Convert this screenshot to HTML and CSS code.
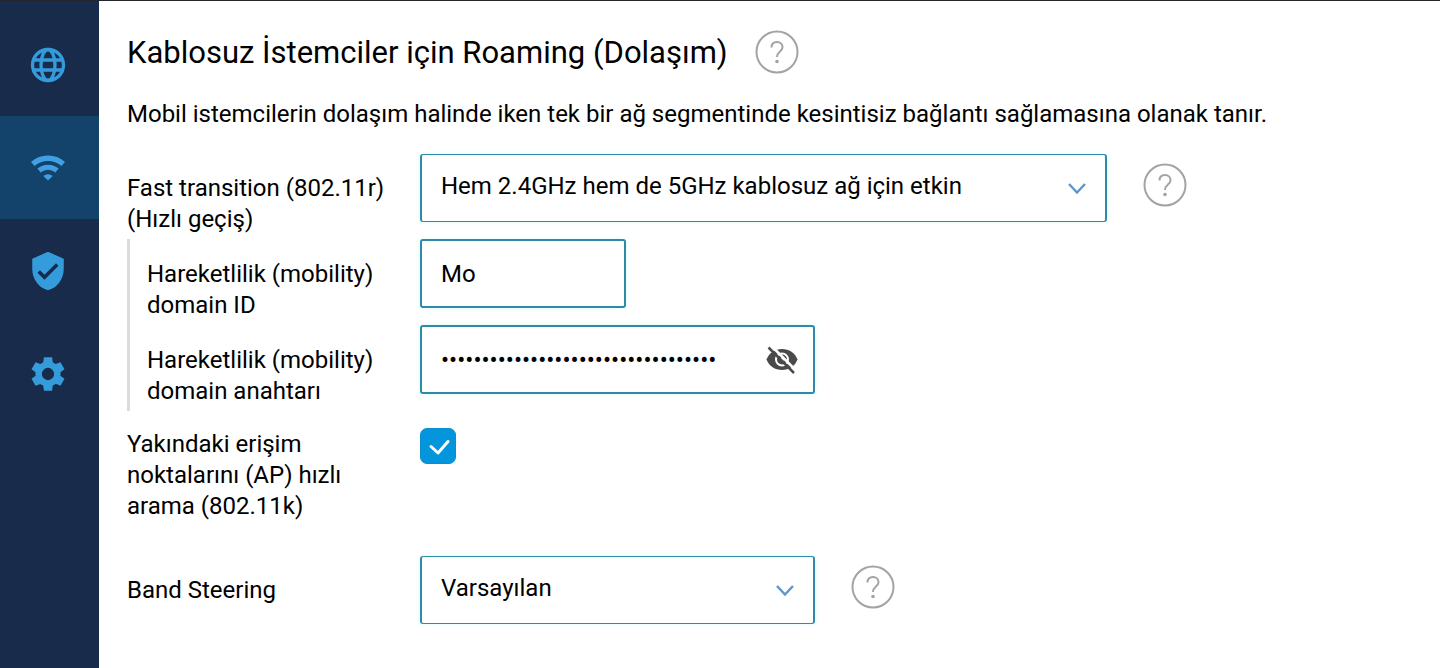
FILE: index.html
```html
<!DOCTYPE html>
<html lang="tr">
<head>
  <meta charset="utf-8">
  <title>Roaming</title>
  <link rel="stylesheet" href="styles.css">
</head>
<body>
  <nav class="sidebar">
    <a class="nav-item" href="#" aria-label="İnternet">
      <svg width="36" height="36" viewBox="0 0 36 36" fill="none" stroke="currentColor" stroke-width="3.3">
        <circle cx="18" cy="18" r="15.5"/>
        <ellipse cx="18" cy="18" rx="7" ry="15.5"/>
        <path d="M4 13h28M4 23h28"/>
      </svg>
    </a>
    <a class="nav-item active" href="#" aria-label="Kablosuz">
      <svg width="36" height="36" viewBox="0 0 36 36" fill="none" stroke="currentColor">
        <path stroke-width="5.5" d="M2.800 14a23 23 0 0 1 30.400 0"/>
        <path stroke-width="5" d="M9 20.500a14 14 0 0 1 18 0"/>
        <path fill="currentColor" stroke="none" d="M13.300 26a7 7 0 0 1 9.400 0L18 30.500z"/>
      </svg>
    </a>
    <a class="nav-item" href="#" aria-label="Güvenlik">
      <svg width="42" height="42" viewBox="0 0 24 24" fill="currentColor">
        <path d="M12 1L3 5v6c0 5.55 3.84 10.74 9 12 5.16-1.26 9-6.45 9-12V5l-9-4zm-2 16l-4-4 1.41-1.41L10 14.17l6.59-6.59L18 9l-8 8z"/>
      </svg>
    </a>
    <a class="nav-item" href="#" aria-label="Ayarlar">
      <svg width="40" height="40" viewBox="0 0 24 24" fill="currentColor">
        <path fill-rule="evenodd" d="M19.44 12.99c.04-.33.07-.65.07-.99s-.03-.66-.07-.99l2.45-1.9-2.43-4.22-2.87 1.16c-.52-.4-1.09-.74-1.71-1L14.44 2H9.57l-.44 3.07c-.62.26-1.19.6-1.71 1L4.55 4.89 2.11 9.11l2.44 1.9c-.04.33-.07.65-.07.99s.03.66.07.99l-2.44 1.91 2.43 4.2 2.88-1.15c.53.41 1.1.75 1.72 1.01L9.58 22h4.85l.44-3.07c.62-.26 1.2-.6 1.73-1.01l2.86 1.19 2.43-4.2zM12 15.7a3.7 3.7 0 1 1 0-7.4 3.7 3.7 0 0 1 0 7.4z"/>
      </svg>
    </a>
  </nav>

  <main class="content">
    <header class="page-header">
      <h1>Kablosuz İstemciler için Roaming (Dolaşım)</h1>
      <button class="help" type="button" aria-label="Yardım">
        <svg width="44" height="44" viewBox="0 0 44 44" fill="none" stroke="currentColor" stroke-width="2">
          <circle cx="22" cy="22" r="20.5"/>
          <path d="M16.5 17.5c0-3.5 2.3-5.5 5.5-5.5s5.5 2.2 5.5 5.2c0 4.5-5.5 4.3-5.5 9.8"/>
          <circle cx="22" cy="31.5" r="1.8" fill="currentColor" stroke="none"/>
        </svg>
      </button>
    </header>
    <p class="intro">Mobil istemcilerin dolaşım halinde iken tek bir ağ segmentinde kesintisiz bağlantı sağlamasına olanak tanır.</p>

    <form>
      <div class="row">
        <label for="fast-transition">Fast transition (802.11r) (Hızlı geçiş)</label>
        <div class="select wide">
          <select id="fast-transition">
            <option>Hem 2.4GHz hem de 5GHz kablosuz ağ için etkin</option>
          </select>
          <svg class="arrow" width="20" height="14" viewBox="0 0 20 14"><path d="M2 2l8 8.500 8-8.500"/></svg>
        </div>
        <button class="help" type="button" aria-label="Yardım">
          <svg width="44" height="44" viewBox="0 0 44 44" fill="none" stroke="currentColor" stroke-width="2">
            <circle cx="22" cy="22" r="20.5"/>
            <path d="M16.5 17.5c0-3.5 2.3-5.5 5.5-5.5s5.5 2.2 5.5 5.2c0 4.5-5.5 4.3-5.5 9.8"/>
            <circle cx="22" cy="31.5" r="1.8" fill="currentColor" stroke="none"/>
          </svg>
        </button>
      </div>

      <div class="group">
        <div class="row">
          <label for="domain-id">Hareketlilik (mobility) domain ID</label>
          <input class="text-input short" id="domain-id" type="text" value="Mo">
        </div>
        <div class="row">
          <label for="domain-key">Hareketlilik (mobility) domain anahtarı</label>
          <div class="password">
            <input class="text-input" id="domain-key" type="password" value="0123456789abcdef0123456789abcdef01">
            <button class="toggle" type="button" aria-label="Göster">
              <svg width="34" height="34" viewBox="0 0 34 34" fill="none">
                <path fill="currentColor" d="M1.500 16.500C4 10 10 6 17 6s13 4 15.500 10.500C30 23 24 27 17 27S4 23 1.500 16.500z"/>
                <circle cx="17" cy="16.500" r="6" stroke="#fff" stroke-width="2"/>
                <circle cx="17" cy="16.500" r="2" fill="#fff"/>
                <path stroke="#fff" stroke-width="2.500" d="M6.500 3L31.500 28"/>
                <path stroke="currentColor" stroke-width="2.500" d="M3.500 4.500L29 30"/>
              </svg>
            </button>
          </div>
        </div>
      </div>

      <div class="row check-row">
        <label for="nearby-ap">Yakındaki erişim noktalarını (AP) hızlı arama (802.11k)</label>
        <div class="checkbox">
          <input id="nearby-ap" type="checkbox" checked>
          <svg class="tick" width="36" height="36" viewBox="0 0 36 36"><path d="M11 18.500l7 6.500 10-11.500"/></svg>
        </div>
      </div>

      <div class="row">
        <label for="band-steering">Band Steering</label>
        <div class="select">
          <select id="band-steering">
            <option>Varsayılan</option>
          </select>
          <svg class="arrow" width="20" height="14" viewBox="0 0 20 14"><path d="M2 2l8 8.500 8-8.500"/></svg>
        </div>
        <button class="help" type="button" aria-label="Yardım">
          <svg width="44" height="44" viewBox="0 0 44 44" fill="none" stroke="currentColor" stroke-width="2">
            <circle cx="22" cy="22" r="20.5"/>
            <path d="M16.5 17.5c0-3.5 2.3-5.5 5.5-5.5s5.5 2.2 5.5 5.2c0 4.5-5.5 4.3-5.5 9.8"/>
            <circle cx="22" cy="31.5" r="1.8" fill="currentColor" stroke="none"/>
          </svg>
        </button>
      </div>
    </form>
  </main>
</body>
</html>
```

FILE: styles.css
```css
* {
  box-sizing: border-box;
}

body {
  display: flex;
  min-height: 100vh;
  margin: 0;
  border-top: 1px solid #24262c;
  background-color: #fff;
  color: #000;
  font-family: Roboto, sans-serif;
  font-size: 24px;
  line-height: 31px;
}

/* left menu */
.sidebar {
  flex: none;
  width: 99px;
  padding-top: 12px;
  background-color: #182b4b;
}

.nav-item {
  display: flex;
  align-items: center;
  justify-content: center;
  height: 103px;
  padding-right: 4px;
  color: #349cdb;
}

.nav-item.active {
  background-color: #13426a;
  color: #419fe4;
}

/* page */
.content {
  flex: 1;
  min-width: 0;
  padding: 29px 28px 24px;
}

.page-header {
  display: flex;
  align-items: center;
}

h1 {
  margin: 0 27px 0 0;
  font-size: 31px;
  font-weight: 400;
}

.intro {
  margin: 25px 0 24px;
}

.help {
  flex: none;
  width: 44px;
  height: 44px;
  padding: 0;
  border: none;
  background: none;
  color: #a3a3a3;
  cursor: pointer;
}

.help svg,
.toggle svg {
  display: block;
}

/* form rows */
.row {
  display: flex;
  align-items: flex-start;
}

.row label {
  flex: none;
  width: 293px;
  padding: 19px 28px 4px 0;
}

.row .help {
  margin: 9px 0 0 36px;
}

.group {
  border-left: 3px solid #d7dcdf;
  padding-left: 17px;
}

.group label {
  width: 273px;
  padding-top: 20px;
}

.check-row {
  margin: 17px 0 34px;
}

.check-row label {
  padding-top: 1px;
  padding-bottom: 0;
}

/* fields */
.select,
.password {
  position: relative;
  width: 395px;
}

.select.wide {
  width: 687px;
}

select,
.text-input {
  display: block;
  width: 100%;
  height: 69px;
  margin: 0;
  padding: 0 19px;
  border: 2px solid #2f89a8;
  border-radius: 3px;
  background-color: #fff;
  box-shadow: 0 0 4px #d5fbfa;
  color: #000;
  font: inherit;
}

select {
  appearance: none;
  height: 68px;
  padding-bottom: 4px;
  border-top-width: 1px;
  border-bottom-width: 1px;
}

.text-input.short {
  width: 206px;
}

.password .text-input {
  padding-right: 60px;
}

.arrow {
  position: absolute;
  top: 28px;
  right: 20px;
  fill: none;
  stroke: #5f97cb;
  stroke-width: 2.5;
  pointer-events: none;
}

.toggle {
  position: absolute;
  top: 18px;
  right: 16px;
  padding: 0;
  border: none;
  background: none;
  color: #4a4a4a;
  cursor: pointer;
}

.checkbox {
  position: relative;
}

.checkbox input {
  appearance: none;
  display: block;
  width: 36px;
  height: 36px;
  margin: 0;
  border: 1px solid #0e8dce;
  border-radius: 7px;
  background-color: #fff;
}

.checkbox input:checked {
  background-color: #0396dc;
}

.tick {
  position: absolute;
  top: 0;
  left: 0;
  fill: none;
  stroke: #fff;
  stroke-width: 3;
  stroke-linecap: round;
  stroke-linejoin: round;
  pointer-events: none;
}
```
